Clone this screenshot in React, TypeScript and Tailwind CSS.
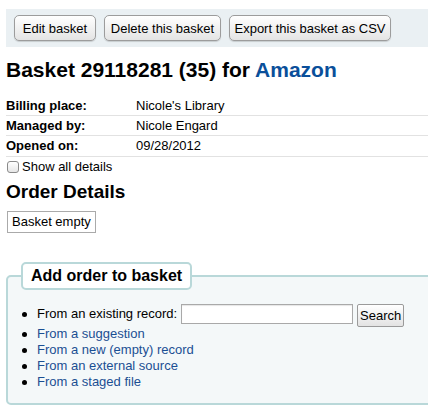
import React from 'react';

const font = { fontFamily: '"Liberation Sans", Arial, sans-serif' };

const ToolbarButton = ({ label, width }: { label: string; width: string }) => (
  <button
    className={`${width} h-[26px] rounded-[5px] border border-[#9c9c9c] bg-gradient-to-b from-white to-[#e4e4e4] text-[13px] leading-none text-black shadow-[0_1px_1px_rgba(0,0,0,0.15)]`}
  >
    {label}
  </button>
);

const Row = ({ label, value, h = 'h-[20px]' }: { label: string; value: string; h?: string }) => (
  <div className={`flex ${h} items-center border-b border-[#e2e2e2]`}>
    <span className="w-[130px] font-bold">{label}</span>
    <span>{value}</span>
  </div>
);

const links = ['From a suggestion', 'From a new (empty) record', 'From an external source', 'From a staged file'];

const Dot = () => <span className="ml-[14px] mr-[10px] h-[5px] w-[5px] shrink-0 rounded-full bg-black" />;

const App: React.FC = () => {
  return (
    <div className="h-[411px] w-[428px] overflow-hidden bg-white pl-[6px] text-[13px] text-black" style={font}>
      <div className="w-[480px]">
        {/* Toolbar */}
        <div className="mt-[9px] flex h-[38px] items-start gap-[8px] bg-[#eaf0f3] pl-[8px] pt-[6px]">
          <ToolbarButton label="Edit basket" width="w-[82px]" />
          <ToolbarButton label="Delete this basket" width="w-[117px]" />
          <ToolbarButton label="Export this basket as CSV" width="w-[162px]" />
        </div>

        {/* Title */}
        <h1 className="mt-[11px] text-[21px] font-bold leading-[24px]">
          Basket 29118281 (35) for <a className="text-[#0a4f9a]">Amazon</a>
        </h1>

        {/* Details */}
        <div className="mt-[14px]">
          <Row label="Billing place:" value="Nicole's Library" />
          <Row label="Managed by:" value="Nicole Engard" />
          <Row label="Opened on:" value="09/28/2012" h="h-[21px]" />
        </div>

        <label className="flex h-[20px] items-center pl-[1px]">
          <span className="mr-[3px] h-[12px] w-[12px] rounded-[3px] border border-[#8a8a8a] bg-gradient-to-b from-white to-[#e6e6e6]" />
          Show all details
        </label>

        <h2 className="mt-[4px] text-[19px] font-bold leading-[22px]">Order Details</h2>

        <div className="ml-[1px] mt-[8px] inline-block border border-[#aaaaaa] px-[4px] leading-[20px]">Basket empty</div>

        {/* Add order fieldset */}
        <fieldset className="mt-[29px] w-[460px] rounded-[5px] border-2 border-[#b9d8d9] bg-[#f4f8f9]">
          <legend className="ml-[13px] rounded-[5px] border-2 border-[#b9d8d9] bg-white px-[8px] text-[16px] font-bold leading-[24px]">
            Add order to basket
          </legend>
          <ul className="pb-[13px] pt-[12px]">
            <li className="flex h-[24px] items-center">
              <Dot />
              <span>From an existing record:</span>
              <input className="ml-[4px] h-[20px] w-[172px] border border-[#a9a9a9] bg-white shadow-[inset_0_1px_1px_rgba(0,0,0,0.1)]" />
              <button className="ml-[4px] mt-[3px] h-[23px] w-[47px] rounded-[2px] border border-[#9a9a9a] bg-gradient-to-b from-white to-[#e3e3e3] text-[13px] leading-none">
                Search
              </button>
            </li>
            {links.map((l) => (
              <li key={l} className="flex h-[16px] items-center">
                <Dot />
                <a className="text-[#1b4f93]">{l}</a>
              </li>
            ))}
          </ul>
        </fieldset>
      </div>
    </div>
  );
};

export default App;
